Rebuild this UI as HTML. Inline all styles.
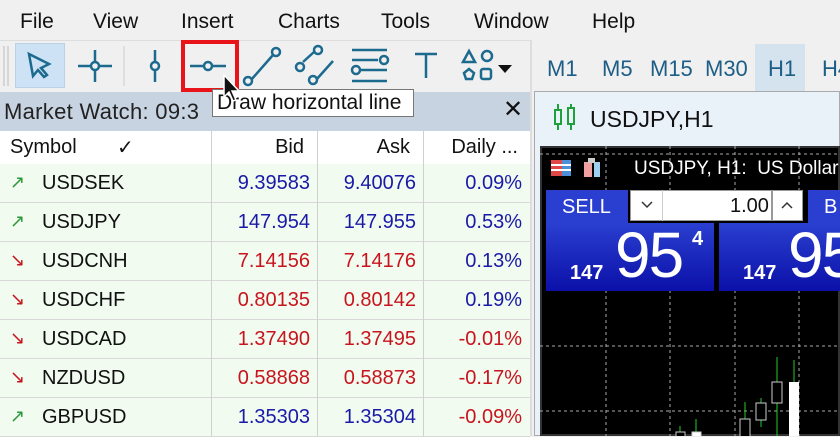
<!DOCTYPE html>
<html><head><meta charset="utf-8"><style>
*{margin:0;padding:0;box-sizing:border-box}
body{width:840px;height:436px;overflow:hidden;background:#f0f0f0;font-family:"Liberation Sans","DejaVu Sans",sans-serif;position:relative;color:#111}
.a{position:absolute;white-space:nowrap}
.menu span{position:absolute;top:10px;font-size:21px;color:#111}
.tb{left:0;top:40px;width:530px;height:52px;background:#f0f0f0;border-top:1px solid #ddd}
.mw{left:0;top:92px;width:532px;height:39px;background:#c7d3e0}
.row{position:absolute;left:0;width:530px;height:39px;background:#f1fbef;border-bottom:1px solid #d8d8d8;font-size:20px}
.row div{position:absolute;top:8px}
.c1{left:42px;color:#111}.c2{right:220px}.c3{right:114px}.c4{right:8px}
.bl{color:#1a1aa8}.rd{color:#c8141e}
.ar{left:10px;font-size:18px}
.vl{position:absolute;top:131px;width:1px;height:305px;background:#d0d0d0}
.tf span{position:absolute;top:56px;font-size:22px;color:#1d5e86}
</style></head><body>
<div class="menu"><span style="left:20px">File</span><span style="left:93px">View</span><span style="left:181px">Insert</span><span style="left:278px">Charts</span><span style="left:381px">Tools</span><span style="left:474px">Window</span><span style="left:592px">Help</span></div>
<div class="a tb"></div>
<div class="a" style="left:15px;top:43px;width:50px;height:45px;background:#cde3f5;border:1px solid #b9d2e8"></div>
<svg class="a" style="left:0;top:40px" width="530" height="52" viewBox="0 0 530 52" fill="none" stroke="#1d6a8f" stroke-width="2.5">
<line x1="4" y1="6" x2="4" y2="46" stroke="#bbb" stroke-width="1"/><line x1="8" y1="6" x2="8" y2="46" stroke="#bbb" stroke-width="1"/>
<path d="M29 14 L49 24 L41 28 L47 35 L44 37 L38 30 L33 36 Z"/>
<line x1="78" y1="26" x2="112" y2="26"/><line x1="95" y1="10" x2="95" y2="42"/><circle cx="95" cy="26" r="4" fill="#f0f0f0"/>
<line x1="124" y1="6" x2="124" y2="46" stroke="#ccc" stroke-width="1"/>
<line x1="155" y1="10" x2="155" y2="42"/><circle cx="155" cy="26" r="4" fill="#f0f0f0"/>
<line x1="190" y1="26" x2="226" y2="26"/><circle cx="208" cy="26" r="4" fill="#f0f0f0"/>
<line x1="251" y1="40" x2="273" y2="15"/><circle cx="248" cy="41" r="4" fill="#f0f0f0"/><circle cx="276" cy="12" r="4" fill="#f0f0f0"/>
<line x1="303" y1="22" x2="314" y2="12"/><line x1="316" y1="40" x2="333" y2="21"/><circle cx="300" cy="27" r="4" fill="#f0f0f0"/><circle cx="318" cy="10" r="4" fill="#f0f0f0"/><circle cx="313" cy="40" r="4" fill="#f0f0f0"/>
<line x1="352" y1="10" x2="387" y2="10"/><line x1="352" y1="20" x2="378" y2="20"/><circle cx="384" cy="20" r="4" fill="#f0f0f0"/><line x1="360" y1="30" x2="387" y2="30"/><circle cx="356" cy="30" r="4" fill="#f0f0f0"/><line x1="352" y1="41" x2="387" y2="41"/>
<line x1="415" y1="14" x2="437" y2="14"/><line x1="426" y1="14" x2="426" y2="38"/>
<path d="M463 22 L469 11 L475 22 Z"/><circle cx="487" cy="16" r="5"/><path d="M464 33 L469 29 L474 33 L472 39 L466 39 Z"/><rect x="481" y="29" width="10" height="10" rx="2"/>
<path d="M498 25 L512 25 L505 33 Z" fill="#111" stroke="none"/>
</svg>
<div class="a" style="left:181px;top:40px;width:58px;height:52px;border:4px solid #e8141a"></div>
<div class="a mw"><span class="a" style="left:4px;top:7px;font-size:22px;color:#222;letter-spacing:0.3px">Market Watch: 09:3</span><span class="a" style="left:503px;top:3px;font-size:24px;font-weight:bold">✕</span></div>
<div class="a" style="left:212px;top:89px;width:202px;height:28px;background:#fff;border:1px solid #777;font-size:21px;padding:1px 0 0 4px;color:#111">Draw horizontal line</div>
<svg class="a" style="left:222px;top:73px" width="22" height="32"><path d="M2 2 L2 24 L7 19 L11 28 L14 27 L10 18 L17 18 Z" fill="#111" stroke="#fff" stroke-width="1.5"/></svg>
<div class="a" style="left:0;top:131px;width:530px;height:33px;background:#fff;font-size:20px"><span class="a" style="left:10px;top:5px">Symbol</span><span class="a" style="left:117px;top:4px">✓</span><span class="a" style="right:226px;top:5px">Bid</span><span class="a" style="right:120px;top:5px">Ask</span><span class="a" style="right:12px;top:5px">Daily ...</span></div>
<div class="row" style="top:164px"><div class="ar" style="color:#2a9a3a">↗</div><div class="c1">USDSEK</div><div class="c2 bl">9.39583</div><div class="c3 bl">9.40076</div><div class="c4 bl">0.09%</div></div>
<div class="row" style="top:203px"><div class="ar" style="color:#2a9a3a">↗</div><div class="c1">USDJPY</div><div class="c2 bl">147.954</div><div class="c3 bl">147.955</div><div class="c4 bl">0.53%</div></div>
<div class="row" style="top:242px"><div class="ar" style="color:#c8141e">↘</div><div class="c1">USDCNH</div><div class="c2 rd">7.14156</div><div class="c3 rd">7.14176</div><div class="c4 bl">0.13%</div></div>
<div class="row" style="top:281px"><div class="ar" style="color:#c8141e">↘</div><div class="c1">USDCHF</div><div class="c2 rd">0.80135</div><div class="c3 rd">0.80142</div><div class="c4 bl">0.19%</div></div>
<div class="row" style="top:320px"><div class="ar" style="color:#c8141e">↘</div><div class="c1">USDCAD</div><div class="c2 rd">1.37490</div><div class="c3 rd">1.37495</div><div class="c4 rd">-0.01%</div></div>
<div class="row" style="top:359px"><div class="ar" style="color:#c8141e">↘</div><div class="c1">NZDUSD</div><div class="c2 rd">0.58868</div><div class="c3 rd">0.58873</div><div class="c4 rd">-0.17%</div></div>
<div class="row" style="top:398px"><div class="ar" style="color:#2a9a3a">↗</div><div class="c1">GBPUSD</div><div class="c2 bl">1.35303</div><div class="c3 bl">1.35304</div><div class="c4 rd">-0.09%</div></div>
<div class="vl" style="left:211px"></div><div class="vl" style="left:317px"></div><div class="vl" style="left:423px"></div>
<div class="a" style="left:530px;top:40px;width:2px;height:396px;background:#ddd"></div>
<div class="a" style="left:755px;top:44px;width:50px;height:47px;background:#d5e3ef"></div>
<div class="tf"><span style="left:547px">M1</span><span style="left:602px">M5</span><span style="left:650px">M15</span><span style="left:705px">M30</span><span style="left:768px">H1</span><span style="left:822px">H4</span></div>
<div class="a" style="left:534px;top:91px;width:306px;height:345px;background:#e9f1f9;border:1px solid #aaa"></div>
<svg class="a" style="left:552px;top:102px" width="26" height="30" fill="none" stroke="#1ea03a" stroke-width="2"><line x1="6" y1="2" x2="6" y2="28"/><rect x="3" y="8" width="6" height="14" fill="#e9f1f9"/><line x1="19" y1="2" x2="19" y2="28"/><rect x="16" y="6" width="6" height="16" fill="#e9f1f9"/></svg>
<span class="a" style="left:590px;top:106px;font-size:23px;color:#111">USDJPY,H1</span>
<div class="a" style="left:540px;top:146px;width:300px;height:290px;background:#000;border:2px solid #333"></div>
<svg class="a" style="left:540px;top:146px" width="300" height="290" stroke="#aaa" stroke-width="1" stroke-dasharray="3,3"><line x1="66" y1="0" x2="66" y2="290"/><line x1="130" y1="0" x2="130" y2="290"/><line x1="195" y1="0" x2="195" y2="290"/><line x1="259" y1="0" x2="259" y2="290"/><line x1="0" y1="8" x2="300" y2="8"/><line x1="0" y1="200" x2="300" y2="200"/><line x1="0" y1="265" x2="300" y2="265"/>
<g stroke-dasharray="none"><line x1="140" y1="280" x2="140" y2="300" stroke="#2c2"/><rect x="136" y="286" width="9" height="10" stroke="#ccc" fill="#000"/><line x1="156" y1="273" x2="156" y2="290" stroke="#2c2"/><rect x="152" y="286" width="9" height="8" stroke="#ccc" fill="#fff"/><line x1="205" y1="256" x2="205" y2="300" stroke="#2c2"/><rect x="200" y="273" width="10" height="20" stroke="#ccc" fill="#000"/><line x1="221" y1="252" x2="221" y2="281" stroke="#2c2"/><rect x="216" y="257" width="10" height="17" stroke="#ccc" fill="#000"/><line x1="237" y1="211" x2="237" y2="300" stroke="#2c2"/><rect x="232" y="236" width="10" height="21" stroke="#ccc" fill="#000"/><line x1="254" y1="214" x2="254" y2="240" stroke="#2c2"/><rect x="249" y="236" width="10" height="60" stroke="none" fill="#fff"/></g></svg>
<svg class="a" style="left:550px;top:157px" width="50" height="24"><rect x="1" y="3" width="20" height="16" fill="#e04848"/><rect x="12" y="3" width="9" height="16" fill="#4a8fd8"/><line x1="1" y1="8" x2="21" y2="8" stroke="#fff" stroke-width="2"/><line x1="1" y1="13" x2="21" y2="13" stroke="#fff" stroke-width="2"/><rect x="34" y="5" width="8" height="15" fill="#f0a0a0"/><rect x="44" y="5" width="6" height="15" fill="#9fd0f0"/><rect x="38" y="1" width="7" height="5" fill="#ccc"/></svg>
<span class="a" style="left:634px;top:158px;font-size:19px;color:#fff">USDJPY, H1:&nbsp; US Dollar v</span>
<div class="a" style="left:546px;top:190px;width:82px;height:33px;background:#2a3fd0;color:#fff;font-size:20px;padding:6px 0 0 16px">SELL</div>
<div class="a" style="left:630px;top:190px;width:142px;height:31px;background:#fff;border:1px solid #999"></div>
<svg class="a" style="left:640px;top:200px" width="14" height="10"><path d="M2 2 L7 7 L12 2" fill="none" stroke="#333" stroke-width="1.5"/></svg>
<div class="a" style="left:662px;top:190px;width:1px;height:31px;background:#ccc"></div>
<span class="a" style="left:730px;top:195px;font-size:20px">1.00</span>
<div class="a" style="left:772px;top:190px;width:31px;height:31px;background:#fff;border:1px solid #999"></div>
<svg class="a" style="left:780px;top:200px" width="14" height="10"><path d="M2 8 L7 3 L12 8" fill="none" stroke="#333" stroke-width="1.5"/></svg>
<div class="a" style="left:808px;top:190px;width:32px;height:33px;background:#2a3fd0;color:#fff;font-size:20px;padding:6px 0 0 16px">B</div>
<div class="a" style="left:546px;top:223px;width:168px;height:68px;background:linear-gradient(#2a3fd0,#0b10a8)"></div>
<div class="a" style="left:719px;top:223px;width:121px;height:68px;background:linear-gradient(#2a3fd0,#0b10a8)"></div>
<span class="a" style="left:570px;top:262px;color:#fff;font-size:20px;font-weight:bold">147</span>
<span class="a" style="left:615px;top:218px;color:#fff;font-size:64px;letter-spacing:-2px">95</span>
<span class="a" style="left:692px;top:228px;color:#fff;font-size:20px;font-weight:bold">4</span>
<span class="a" style="left:743px;top:262px;color:#fff;font-size:20px;font-weight:bold">147</span>
<span class="a" style="left:788px;top:218px;color:#fff;font-size:64px;letter-spacing:-2px">95</span>
</body></html>
